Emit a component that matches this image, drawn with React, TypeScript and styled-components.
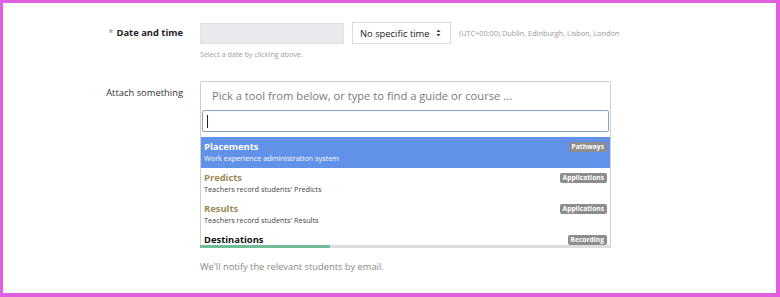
import React from "react";
import styled, { createGlobalStyle } from "styled-components";

const Global = createGlobalStyle`
  html, body { margin: 0; padding: 0; background: #fff; }
  body { font-family: "Open Sans", "Liberation Sans", sans-serif; }
  * { box-sizing: border-box; }
`;

const Frame = styled.div`
  width: 780px;
  height: 297px;
  border-style: solid;
  border-color: #e05ee0;
  border-width: 3px 4px 4px 3px;
  padding-top: 19px;
  overflow: hidden;
`;

const Row = styled.div<{ $mt?: number }>`
  display: grid;
  grid-template-columns: 180px 1fr;
  column-gap: 17px;
  margin-top: ${(p) => p.$mt ?? 0}px;
`;

const Label = styled.div<{ $bold?: boolean; $pt?: number }>`
  text-align: right;
  font-size: 9.4px;
  line-height: 14px;
  font-weight: ${(p) => (p.$bold ? 700 : 400)};
  color: ${(p) => (p.$bold ? "#222" : "#333")};
  padding-top: ${(p) => p.$pt ?? 0}px;
`;

const Star = styled.span`
  color: #888;
  font-weight: 400;
  margin-right: 3px;
`;

const Field = styled.div`
  display: flex;
  flex-direction: column;
`;

const Controls = styled.div`
  display: flex;
  align-items: center;
`;

const DateInput = styled.div`
  width: 144px;
  height: 21px;
  background: #e9eaee;
  border: 1px solid #e0e1e5;
`;

const Select = styled.div`
  margin-left: 8px;
  width: 99px;
  height: 22px;
  border: 1px solid #dcdcdc;
  background: #fff;
  display: flex;
  align-items: center;
  justify-content: space-between;
  padding: 0 9px 0 7px;
  font-size: 9.4px;
  white-space: nowrap;
  color: #222;
`;

const Zone = styled.span`
  margin-left: 8px;
  font-size: 7.3px;
  white-space: nowrap;
  color: #9a9a9a;
`;

const Hint = styled.div`
  margin-top: 4px;
  font-size: 7.2px;
  line-height: 12px;
  color: #a0a0a0;
`;

const Picker = styled.div`
  width: 411px;
  border: 1px solid #cfcfcf;
  border-bottom: none;
  border-radius: 2px 2px 0 0;
  display: flex;
  flex-direction: column;
`;

const Placeholder = styled.div`
  height: 27px;
  padding-left: 11px;
  display: flex;
  align-items: center;
  font-size: 11.2px;
  color: #7a7a7a;
`;

const Search = styled.div`
  margin: 1px 1px 0 1px;
  height: 22px;
  border: 1px solid #8aa0c8;
  border-radius: 2px;
  display: flex;
  align-items: center;
  padding-left: 4px;
`;

const Caret = styled.span`
  width: 1px;
  height: 13px;
  background: #222;
`;

const List = styled.div`
  margin-top: 5px;
  height: 108px;
  overflow: hidden;
`;

const Item = styled.div<{ $active?: boolean }>`
  position: relative;
  height: 31px;
  padding: 3px 4px 0 3px;
  background: ${(p) => (p.$active ? "#6291ea" : "transparent")};
`;

const Title = styled.div<{ $color: string }>`
  font-size: 9.4px;
  font-weight: 700;
  line-height: 13px;
  color: ${(p) => p.$color};
`;

const Sub = styled.div<{ $active?: boolean }>`
  font-size: 7.3px;
  line-height: 11px;
  color: ${(p) => (p.$active ? "#fff" : "#444")};
`;

const Badge = styled.span`
  position: absolute;
  right: 3px;
  top: 5px;
  background: #8d8d8d;
  color: #fff;
  font-size: 6.7px;
  font-weight: 700;
  line-height: 10px;
  padding: 0 3px;
  border-radius: 2px;
`;

const Progress = styled.div`
  width: 411px;
  height: 3px;
  background: #dddddd;
  display: flex;
`;

const ProgressFill = styled.div`
  background: #6fbe98;
  height: 100%;
`;

const Note = styled.div`
  margin-top: 12px;
  font-size: 9.3px;
  line-height: 14px;
  color: #888;
`;

const items = [
  { title: "Placements", sub: "Work experience administration system", badge: "Pathways", color: "#fff", active: true },
  { title: "Predicts", sub: "Teachers record students' Predicts", badge: "Applications", color: "#9a8a55" },
  { title: "Results", sub: "Teachers record students' Results", badge: "Applications", color: "#9a8a55" },
  { title: "Destinations", sub: "Record student destinations", badge: "Recording", color: "#111" },
];

function UpDown() {
  return (
    <svg width="5" height="8" viewBox="0 0 5 8" aria-hidden="true">
      <path d="M0.5 3 L2.5 0.6 L4.5 3 Z" fill="#444" />
      <path d="M0.5 5 L2.5 7.4 L4.5 5 Z" fill="#444" />
    </svg>
  );
}

export default function App() {
  return (
    <>
      <Global />
      <Frame>
        <Row>
          <Label $bold $pt={4}>
            <Star>*</Star>Date and time
          </Label>
          <Field>
            <Controls>
              <DateInput />
              <Select>
                No specific time
                <UpDown />
              </Select>
              <Zone>(UTC+00:00) Dublin, Edinburgh, Lisbon, London</Zone>
            </Controls>
            <Hint>Select a date by clicking above.</Hint>
          </Field>
        </Row>
        <Row $mt={21}>
          <Label $pt={5}>Attach something</Label>
          <Field>
            <Picker>
              <Placeholder>Pick a tool from below, or type to find a guide or course ...</Placeholder>
              <Search>
                <Caret />
              </Search>
              <List>
                {items.map((it) => (
                  <Item key={it.title} $active={it.active}>
                    <Title $color={it.color}>{it.title}</Title>
                    <Sub $active={it.active}>{it.sub}</Sub>
                    <Badge>{it.badge}</Badge>
                  </Item>
                ))}
              </List>
            </Picker>
            <Progress>
              <ProgressFill style={{ width: "130px" }} />
            </Progress>
            <Note>We'll notify the relevant students by email.</Note>
          </Field>
        </Row>
      </Frame>
    </>
  );
}
